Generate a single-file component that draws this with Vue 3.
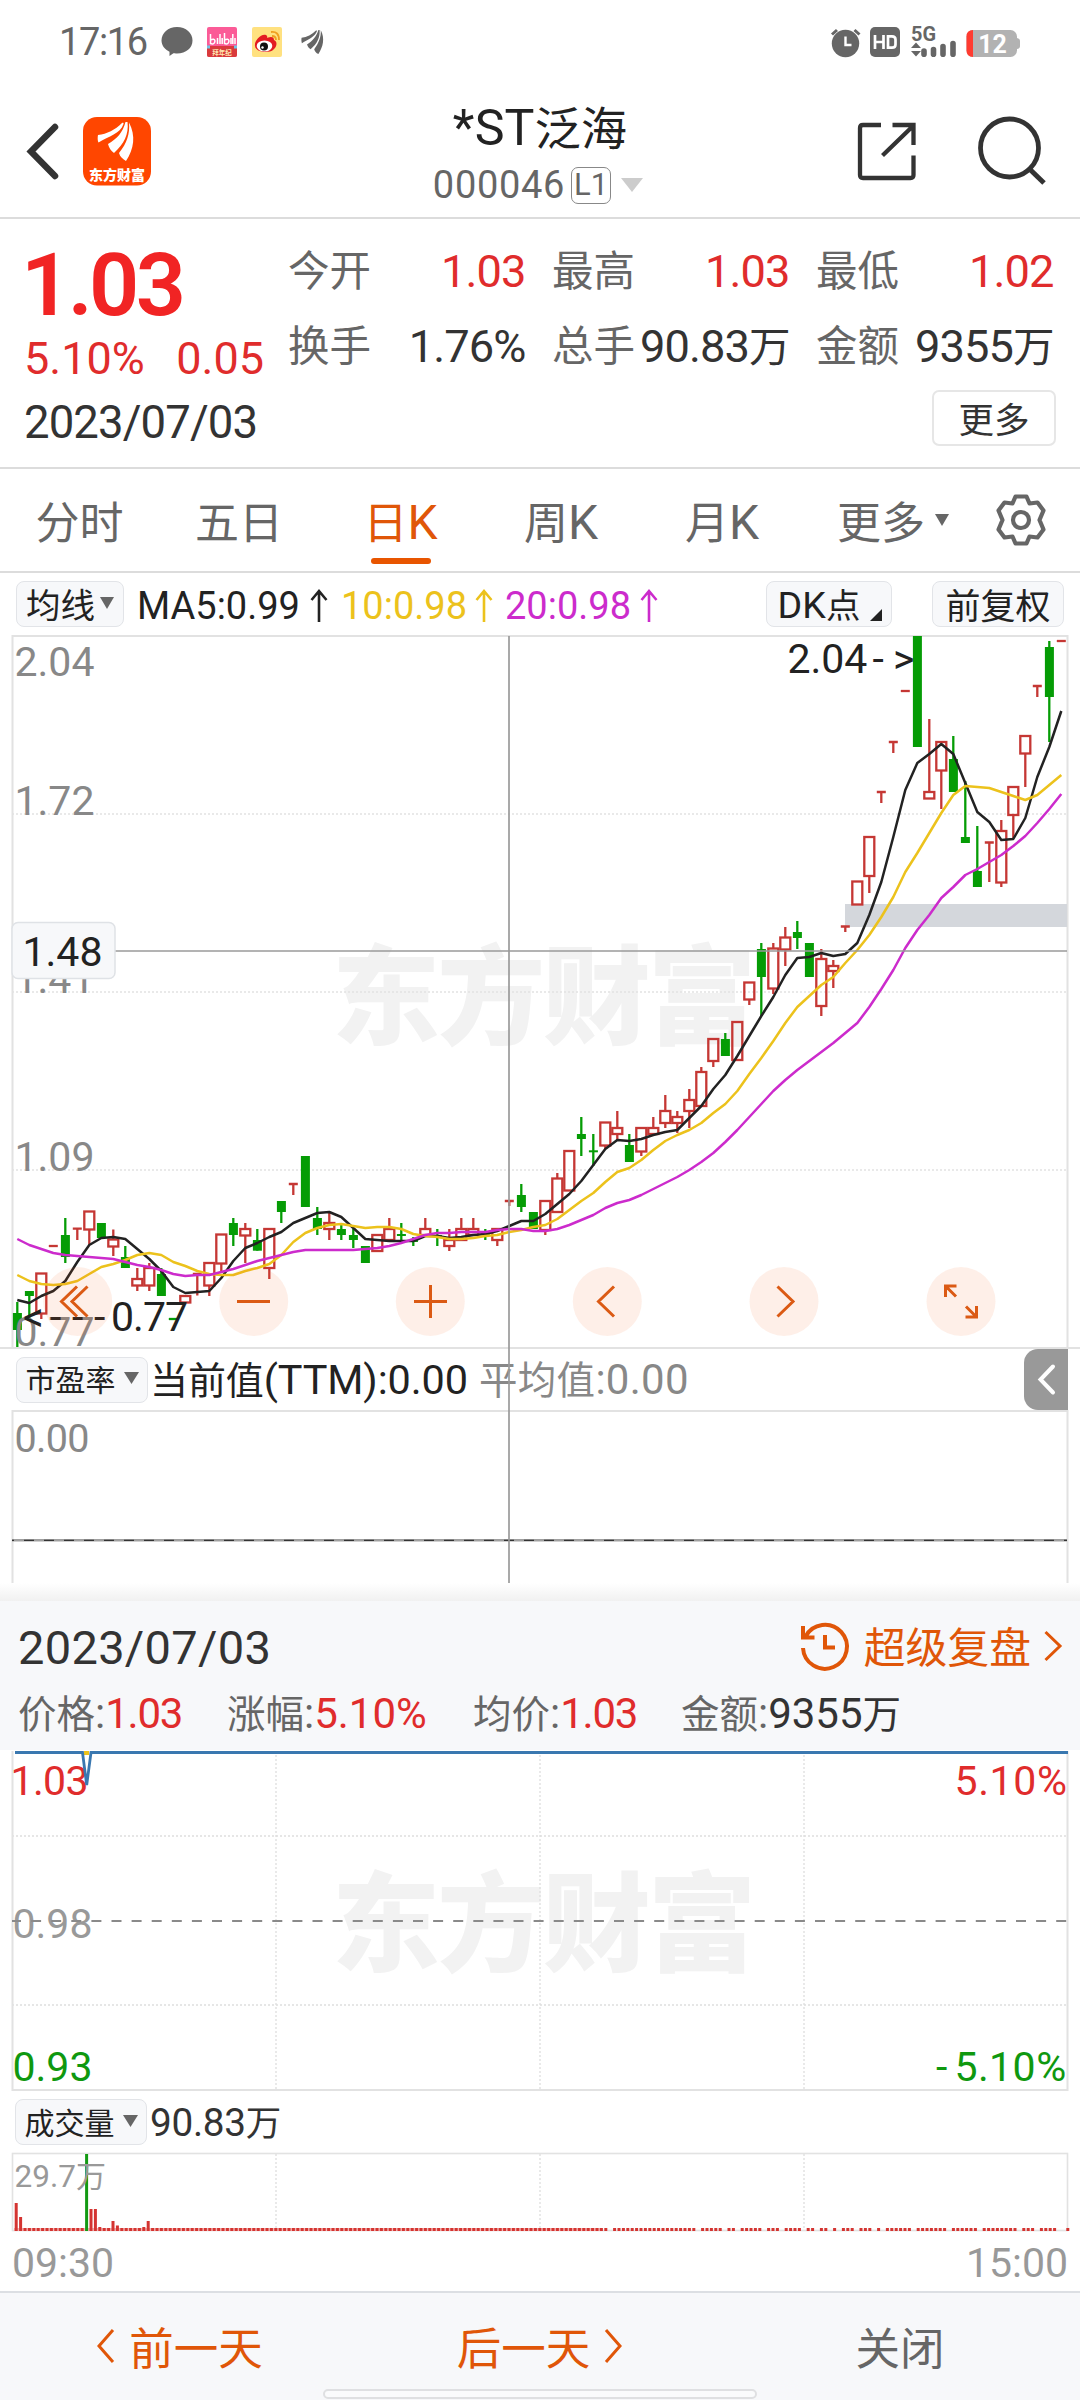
<script setup>
import { h } from 'vue'

// Mixed text: Latin runs are set slightly larger than the Chinese ones.
const Txt = (props) =>
  h('span', { class: 'mix' }, props.t.split(/([\u4e00-\u9fff]+)/).filter(Boolean).map((s) =>
    h('span', { class: /[\u4e00-\u9fff]/.test(s) ? 'zh' : 'la' }, s)))
Txt.props = ['t']

const stats = [
  ['今开', '1.03', true], ['最高', '1.03', true], ['最低', '1.02', true],
  ['换手', '1.76%', false], ['总手', '90.83万', false], ['金额', '9355万', false],
]
const tabs = [
  { t: '分时', w: 159 }, { t: '五日', w: 160 }, { t: '日K', w: 163, on: true }, { t: '周K', w: 158 }, { t: '月K', w: 164 },
]
const averages = [
  { t: 'MA5:0.99', w: 170, c: '#222', m: 13 },
  { t: '10:0.98', w: 131, c: '#ecc21c', m: 12 },
  { t: '20:0.98', w: 132, c: '#cc2bcc', m: 0 },
]
const detail = [
  ['价格:', '1.03', true, 209], ['涨幅:', '5.10%', true, 246], ['均价:', '1.03', true, 208], ['金额:', '9355万', false, 240],
]

// kind (r red, g green, t T-shape, d dash), high, body top, body bottom, low
const candles = [
  ['g', 1302, 1313, 1330, 1347], ['g', 1291, 1291, 1296, 1320], ['r', 1273.5, 1273.5, 1313.5, 1319], ['d', 1246, 1246, 1246, 1246],
  ['g', 1218, 1235, 1257, 1263], ['t', 1228.7, 1228.7, 1228.7, 1240], ['r', 1211.5, 1211.5, 1229.5, 1245], ['g', 1223, 1223, 1238, 1238],
  ['r', 1229.5, 1239.5, 1246.5, 1256], ['g', 1246, 1257, 1268, 1268], ['r', 1268, 1279, 1285.5, 1291], ['r', 1263, 1268, 1285.5, 1291],
  ['g', 1268, 1274, 1296, 1296], ['dg', 1319, 1319, 1319, 1319], ['r', 1296, 1296, 1302.5, 1302.5], ['t', 1274, 1274, 1274, 1295.5],
  ['r', 1263, 1263, 1285.5, 1296], ['r', 1234.5, 1234.5, 1263.5, 1273], ['g', 1218, 1223, 1235, 1246], ['r', 1223, 1229, 1235.5, 1263],
  ['g', 1229, 1240, 1250.7, 1250.7], ['r', 1229, 1229, 1268, 1279], ['g', 1201, 1201, 1212, 1223], ['t', 1184, 1184, 1184, 1195],
  ['g', 1156, 1156, 1207, 1207], ['g', 1207, 1218, 1229, 1235], ['r', 1213, 1223, 1229, 1240], ['g', 1223, 1229, 1235, 1240],
  ['g', 1229, 1235, 1240, 1248], ['g', 1246, 1246, 1263, 1263], ['r', 1235, 1235, 1251, 1251], ['r', 1218, 1229, 1240, 1240],
  ['g', 1223, 1234, 1236, 1240], ['g', 1237, 1240, 1242, 1246], ['r', 1218, 1229, 1235, 1235], ['g', 1229, 1235, 1237, 1246],
  ['r', 1229, 1240, 1246, 1251], ['r', 1218, 1229, 1240, 1240], ['r', 1218, 1229, 1235, 1235], ['g', 1229, 1233, 1235, 1240],
  ['r', 1229, 1229, 1240, 1246], ['t', 1201, 1201, 1201, 1206], ['g', 1184, 1195, 1207, 1212], ['g', 1212, 1212, 1229, 1229],
  ['r', 1201, 1201, 1230, 1235], ['r', 1173, 1178.5, 1212, 1212], ['r', 1151, 1151, 1190.5, 1190.5], ['g', 1117, 1134, 1139, 1156],
  ['g', 1134, 1150.3, 1152.3, 1166], ['r', 1122.5, 1122.5, 1145.5, 1149], ['r', 1111, 1128, 1134, 1140], ['g', 1134, 1145, 1162, 1162],
  ['r', 1128, 1128, 1151.5, 1156], ['r', 1117, 1128, 1134, 1134], ['r', 1095, 1111, 1123, 1128], ['r', 1111, 1117, 1123, 1133],
  ['r', 1089, 1100, 1111, 1128], ['r', 1067, 1072, 1106, 1106], ['r', 1039, 1039, 1061, 1067], ['g', 1033, 1039, 1056, 1056],
  ['r', 1022, 1022, 1060, 1060], ['r', 982.5, 982.5, 999.5, 1005], ['g', 943, 949, 977, 1016], ['r', 943, 948.5, 988.5, 994],
  ['r', 927, 937.5, 949.5, 966], ['g', 921, 932, 938, 949], ['g', 943, 943, 977, 977], ['r', 949, 959, 1006, 1016],
  ['r', 960, 966, 971, 988], ['t', 926.5, 926.5, 926.5, 932], ['r', 881.5, 881.5, 904.5, 904.5], ['r', 837, 837, 876, 893],
  ['t', 792, 792, 792, 803], ['t', 742, 742, 742, 753], ['d', 691, 691, 691, 691], ['g', 636, 636, 747, 747],
  ['r', 719, 792, 798.5, 798.5], ['r', 742, 742, 770.5, 809], ['g', 736, 759, 792, 792], ['g', 781, 837, 843, 843],
  ['g', 826, 871, 887, 887], ['t', 842.5, 842.5, 842.5, 882], ['r', 820, 831, 882.5, 887], ['r', 787, 787, 815, 838],
  ['r', 736, 736, 753.5, 787], ['t', 686, 686, 686, 697], ['g', 641, 647, 697, 742], ['d', 641, 641, 641, 641],
]
const cx = (i) => 17.3 + 12 * i
const line = (ys) => ys.map((y, i) => `${cx(i).toFixed(1)},${y}`).join(' ')
const ma5 = line([1300, 1303, 1296, 1291, 1281, 1262, 1245, 1238, 1237, 1239, 1249, 1259, 1271, 1287, 1293, 1292, 1291, 1278, 1261, 1248, 1243, 1237, 1232, 1223, 1218, 1213, 1212, 1217, 1228, 1239, 1240, 1241, 1241, 1241, 1236, 1236, 1238, 1237, 1235, 1234, 1231, 1226, 1221, 1221, 1214, 1204, 1194, 1181, 1165, 1149, 1140, 1141, 1139, 1135, 1132, 1130, 1118, 1106, 1089, 1075, 1056, 1036, 1016, 997, 975, 958, 957, 953, 956, 954, 943, 915, 882, 837, 790, 763, 754, 744, 754, 783, 812, 822, 840, 839, 818, 777, 747, 711])
const ma10 = line([1275, 1281, 1284, 1285, 1284, 1281, 1274, 1267, 1264, 1260, 1255, 1253, 1255, 1262, 1266, 1271, 1274, 1275, 1275, 1271, 1268, 1264, 1255, 1242, 1233, 1228, 1225, 1224, 1226, 1228, 1227, 1227, 1229, 1234, 1236, 1237, 1239, 1239, 1238, 1236, 1235, 1232, 1230, 1227, 1225, 1219, 1210, 1201, 1193, 1182, 1172, 1168, 1160, 1150, 1141, 1135, 1130, 1123, 1113, 1104, 1091, 1074, 1058, 1041, 1023, 1007, 996, 985, 977, 963, 950, 935, 917, 897, 872, 853, 833, 813, 795, 786, 787, 788, 792, 796, 800, 795, 785, 775])
const ma20 = line([1239, 1245, 1249, 1253, 1255, 1256, 1257, 1258, 1259, 1262, 1265, 1267, 1270, 1274, 1276, 1275, 1275, 1272, 1269, 1265, 1261, 1258, 1255, 1252, 1250, 1250, 1250, 1250, 1250, 1249, 1248, 1246, 1243, 1239, 1235, 1233, 1233, 1232, 1232, 1232, 1230, 1229, 1229, 1231, 1231, 1229, 1225, 1220, 1215, 1208, 1203, 1200, 1195, 1189, 1183, 1177, 1170, 1162, 1153, 1142, 1130, 1117, 1104, 1091, 1080, 1070, 1061, 1052, 1043, 1033, 1023, 1007, 989, 970, 948, 930, 915, 898, 887, 875, 869, 862, 855, 846, 836, 823, 809, 794])

const tall = { 0: 28, 1: 14, 16: 77, 17: 22, 18: 22, 19: 4, 22: 10, 23: 5.5, 29: 4, 30: 10 }
const traded = [[0, 601], [606, 609], [615, 654], [658, 697], [702, 723], [729, 737], [742, 763], [768, 780], [786, 799], [807, 815], [820, 829], [834, 838], [842, 855], [860, 873], [877, 882], [886, 913], [917, 946], [952, 978], [983, 1017], [1021, 1034], [1039, 1056], [1065, 1069]]
const volumes = Array.from({ length: 240 }, (_, i) => ({ i, x: 16.2 + i * 4.4, hgt: tall[i] || 3 }))
  .filter((v) => traded.some(([a, b]) => v.x >= a - 0.7 && v.x <= b + 0.7))
</script>

<template>
  <div class="phone">
    <header class="status">
      <span class="time">17:16</span>
      <svg class="s-left" width="180" height="40" viewBox="155 22 180 40">
        <path d="M177 27c9 0 15.500 6 15.500 13.500S186 53.500 177 53.500c-1.600 0-3-.2-3.600-.2L169.500 56v-4.200C165 49.500 161.500 45.500 161.500 40.500 161.500 33 168 27 177 27z" fill="#666" />
        <rect x="207" y="27" width="30" height="30" rx="2" fill="#fb5b97" />
        <rect x="207" y="46" width="30" height="11" rx="2" fill="#d93a3c" />
        <path d="M207 47h3m24 0h3" stroke="#6fc3e6" stroke-width="3" />
        <path d="M210.500 34v9.500q4 1.500 4.500-2.500-.5-3-4.500-1M217.500 38v6M220 34v10M222.200 38v6M224.500 33v10.500q4 1.500 4.500-2.500-.5-3-4.500-1M231 38v6M232.800 34v10M235 38v6" fill="none" stroke="#fff" stroke-width="1.500" />
        <text x="222" y="54.500" text-anchor="middle" font-size="6.500" font-weight="700" fill="#ffe9b0">拜年纪</text>
        <rect x="252" y="27" width="30" height="30" rx="2" fill="#ffe180" />
        <path d="M255 46c-1-6 7-13 11-11 2 1 1 3 1 3s7-3 7 2c5 2 2 10-4 11.500-7 1.500-14.500-.5-15-5.500z" fill="#e31b22" />
        <ellipse cx="264.500" cy="46" rx="7.800" ry="5.500" fill="#fff" />
        <circle cx="264" cy="46.500" r="4" fill="#111" /><circle cx="262.500" cy="47.500" r="1.200" fill="#fff" />
        <path d="M271 32q8-1 8 8M272 36q4 0 4 4" fill="none" stroke="#f0a020" stroke-width="1.800" />
        <g fill="#666" transform="translate(301 30) scale(.6)">
          <path d="M1 13C10 12 18 8 25 1c1-.8 2 0 1.500 1C23 12 12 15 1.500 22 .5 19 .5 15 1 13z" />
          <path d="M10 24C20 18 26 10 29 0h2C32 12 27 23 16 32c-3-2-5-5-6-8z" />
          <path d="M22 32C30 21 33.500 12 33 .5 40 14 37 28 29 40c-4-2-6-4-7-8z" />
        </g>
      </svg>
      <svg class="s-right" width="200" height="40" viewBox="825 22 200 40">
        <circle cx="845.500" cy="43.500" r="13.700" fill="#666" />
        <path d="M832 34.500l5-4.500M859.500 34.500l-5-4.500" stroke="#666" stroke-width="3" />
        <path d="M845.500 36.500v8.500h6" fill="none" stroke="#fff" stroke-width="2.400" />
        <rect x="870" y="27" width="30" height="30" rx="5" fill="#666" />
        <path d="M875 35v14M883.500 35v14M875 42h8.500M888 36.300h4q3.500 0 3.500 3.200v5q0 3.200-3.500 3.200h-4z" fill="none" stroke="#fff" stroke-width="2.700" />
        <text x="911" y="41" font-size="19.500" font-weight="700" fill="#666" textLength="25" lengthAdjust="spacingAndGlyphs">5G</text>
        <path d="M911 48l5-5.500 5 5.500zM911 51l5 5.500 5-5.500z" fill="#666" />
        <path d="M924 51v3.200M933.500 49.500v4.700M943 46.500v7.700M953 43.500v10.700" stroke="#666" stroke-width="5.600" stroke-linecap="round" />
        <rect x="966.500" y="30" width="50.500" height="27" rx="6.500" fill="#b2b2b2" />
        <path d="M1017 38q3 .5 3 3v5q0 2.500-3 3z" fill="#b2b2b2" />
        <path d="M973 30v27q-6.500 0-6.500-6.500v-14q0-6.500 6.500-6.500z" fill="#ff3b30" />
        <text x="992.500" y="52.500" text-anchor="middle" font-size="25" font-weight="700" fill="#fff">12</text>
      </svg>
    </header>

    <nav class="head">
      <svg class="back" width="136" height="80" viewBox="20 112 136 80">
        <path d="M55 127L31 151.500 55 176" fill="none" stroke="#333" stroke-width="6.500" stroke-linecap="round" />
        <rect x="83" y="117" width="68" height="68.500" rx="14" fill="#ff4600" />
        <g fill="#fff" transform="translate(97 122)">
          <path d="M1 13C10 12 18 8 25 1c1-.8 2 0 1.500 1C23 12 12 14 1.500 20.500 .5 19 .5 15 1 13z" />
          <path d="M11 22C20 17 26 10 28.500 0h2C32 12 27 22 17 31c-3-2-5-5-6-9z" />
          <path d="M22 31C30 21 33 12 32 .5 39 14 37 27 29 39c-3-2-6-4-7-8z" />
        </g>
        <text x="117" y="180" text-anchor="middle" font-size="14" font-weight="900" fill="#fff" textLength="56" lengthAdjust="spacingAndGlyphs">东方财富</text>
      </svg>
      <div class="title">
        <div class="name"><Txt t="*ST泛海" /></div>
        <div class="code"><span>000046</span><i class="l1">L1</i><svg width="22" height="14" viewBox="0 0 22 14"><path d="M0 0h22L11 14z" fill="#ccc" /></svg></div>
      </div>
      <svg class="tools" width="200" height="80" viewBox="850 110 200 80" fill="none" stroke="#333" stroke-width="4.300">
        <path d="M881 125h-18q-3 0-3 3v47q0 3 3 3h47.500q3 0 3-3V155.500M892.500 125h21v20M912 127L882.500 155.500" />
        <circle cx="1009.500" cy="148" r="29" stroke-width="4.800" />
        <path d="M1029 168.500L1044 183" stroke-width="5" />
      </svg>
    </nav>

    <section class="quote">
      <div class="price">
        <div class="now">1.03</div>
        <div class="chg"><span>5.10%</span><span>0.05</span></div>
        <div class="day">2023/07/03</div>
      </div>
      <div class="right">
        <div class="stats">
          <div v-for="s in stats" :key="s[0]" class="stat">
            <span class="k">{{ s[0] }}</span><span class="v" :class="{ up: s[2] }"><Txt :t="s[1]" /></span>
          </div>
        </div>
        <button class="more">更多</button>
      </div>
    </section>

    <nav class="tabs">
      <div v-for="t in tabs" :key="t.t" class="tab" :class="{ on: t.on }" :style="{ width: t.w + 'px' }"><span><Txt :t="t.t" /></span></div>
      <div class="tab last"><span>更多</span><svg width="14" height="12" viewBox="0 0 14 12"><path d="M0 0h14L7 12z" fill="#666" /></svg></div>
      <svg class="gear" width="54" height="54" viewBox="-27 -27 54 54" fill="none" stroke="#666" stroke-width="4.200" stroke-linejoin="round">
        <path d="M-5.500-23.500H5.500L8.500-16.500 16.500-17.500 22.500-9.500 18.500 0 22.500 9.500 16.500 17.500 8.500 16.500 5.500 23.500H-5.500L-8.500 16.500-16.500 17.500-22.500 9.500-18.500 0-22.500-9.500-16.500-17.500-8.500-16.500z" />
        <circle r="8" />
      </svg>
    </nav>

    <div class="marow">
      <button class="chip ma">均线<svg width="14" height="12" viewBox="0 0 14 12"><path d="M0 0h14L7 12z" fill="#666" /></svg></button>
      <div v-for="a in averages" :key="a.t" class="avg" :style="{ color: a.c, marginRight: a.m + 'px' }">
        <span :style="{ width: a.w + 'px' }">{{ a.t }}</span>
        <svg width="18" height="34" viewBox="0 0 18 34" fill="none" stroke="currentColor" stroke-width="2.600"><path d="M9 33V2M1.500 11L9 2l7.500 9" /></svg>
      </div>
      <button class="chip dk"><Txt t="DK点" /><svg width="12" height="12" viewBox="0 0 12 12"><path d="M12 0v12H0z" fill="#222" /></svg></button>
      <button class="chip fq">前复权</button>
    </div>

    <section class="kline">
      <svg class="block" width="1080" height="712" viewBox="0 635 1080 712">
        <text x="332" y="1036" font-size="108" font-weight="900" fill="#f2f2f2" textLength="424">东方财富</text>
        <path d="M12 814H1067M12 992H1067M12 1170H1067" stroke="#e2e2e2" stroke-width="1.500" stroke-dasharray="2 2" />
        <path d="M12.500 1347V636H1067.500V1347" fill="none" stroke="#e2e2e2" stroke-width="2" />
        <rect x="845" y="904" width="222" height="23" fill="#d4d7dc" />
        <g v-for="(c, i) in candles" :key="i" :stroke="c[0] === 'g' || c[0] === 'dg' ? '#059c05' : '#c53734'" stroke-width="2.300" fill="none">
          <template v-if="c[0] === 'g'">
            <path :d="`M${cx(i)} ${c[1]}V${c[4]}`" />
            <rect :x="cx(i) - 4.400" :y="c[2]" width="9" :height="c[3] - c[2]" fill="#059c05" stroke="none" />
          </template>
          <template v-else-if="c[0] === 'r'">
            <path :d="`M${cx(i)} ${c[1]}V${c[2]}M${cx(i)} ${c[3]}V${c[4]}`" />
            <rect :x="cx(i) - 5" :y="c[2]" width="10" :height="c[3] - c[2]" />
          </template>
          <path v-else-if="c[0] === 't'" :d="`M${cx(i) - 4.500} ${c[2]}h9m-4.500 0V${c[4]}`" />
          <path v-else :d="`M${cx(i) - 4.500} ${c[2]}h9`" />
        </g>
        <g fill="none" stroke-width="2.500" stroke-linejoin="round">
          <polyline :points="ma5" stroke="#222" />
          <polyline :points="ma10" stroke="#ecc21c" />
          <polyline :points="ma20" stroke="#cc2bcc" />
        </g>
        <g font-size="41" fill="#888">
          <text x="14.500" y="676">2.04</text><text x="14.500" y="815">1.72</text><text x="14.500" y="993">1.41</text>
          <text x="14.500" y="1171">1.09</text><text x="14.500" y="1346">0.77</text>
        </g>
        <g fill="#222" font-size="41">
          <text x="787.500 810.500 821.300 844.300 872.500 893" y="673">2.04-&gt;</text>
          <text x="23 50 72 94 111 133 143 165" y="1330.500">&lt;---0.77</text>
        </g>
        <path d="M115 951H1067" stroke="#9a9a9a" stroke-width="1.700" />
        <rect x="12" y="922.500" width="103" height="56" rx="6" fill="#f7f8fa" stroke="#dfe2e6" stroke-width="1.500" />
        <text x="22.500" y="965.500" font-size="41" fill="#222">1.48</text>
        <g fill="#f26522" fill-opacity=".1">
          <circle v-for="x in [77.700, 253.700, 430.300, 607.300, 784, 961]" :key="x" :cx="x" cy="1301.500" r="34.500" />
        </g>
        <path d="M77 1286.500L61.500 1301.500 77 1316.500M87.500 1286.500L72 1301.500 87.500 1316.500M237 1301.500h33M414 1301.500h33M430.500 1285v33M614 1286.500L598.500 1301.500 614 1316.500M777.500 1286.500L793 1301.500 777.500 1316.500M956 1296.500L945.500 1286M945.500 1297v-11h11M966 1306.500L976.500 1317M976.500 1306v11h-11" fill="none" stroke="#db5a14" stroke-width="3" />
      </svg>

      <div class="indrow">
        <button class="chip ind">市盈率<svg width="15" height="12" viewBox="0 0 15 12"><path d="M0 0h15L7.500 12z" fill="#666" /></svg></button>
        <span class="cur"><Txt t="当前值(TTM):0.00" /></span><span class="avgv"><Txt t="平均值:0.00" /></span>
        <span class="fold"><svg width="44" height="61" viewBox="0 0 44 61"><path d="M29 17.500L16.500 30.500l12.500 13" fill="none" stroke="#fff" stroke-width="4" stroke-linecap="round" /></svg></span>
      </div>

      <svg class="block" width="1080" height="173" viewBox="0 1410 1080 173">
        <path d="M12.500 1583V1411H1067.500V1583" fill="none" stroke="#e2e2e2" stroke-width="2" />
        <text x="14.500" y="1452" font-size="39.500" fill="#888" textLength="75">0.00</text>
        <path d="M12 1540.300H1067" stroke="#a0a0a0" stroke-width="2.600" />
        <path d="M12 1540.300H1067" stroke="#333" stroke-width="1.300" stroke-dasharray="10 10" stroke-dashoffset="8" />
      </svg>
      <i class="cross"></i>
    </section>
    <div class="shade"></div>

    <section class="sheet">
      <div class="sheet-top">
        <span class="sday">2023/07/03</span>
        <span class="replay">
          <svg width="50" height="50" viewBox="0 0 50 50" fill="none" stroke="#e05608" stroke-width="4"><path d="M5.500 15.500A22 22 0 1 1 3 27M3 5v11.500H14.500M25 14v12.500H35" /></svg>
          <b>超级复盘</b>
          <svg width="18" height="32" viewBox="0 0 18 32" fill="none" stroke="#e05608" stroke-width="3"><path d="M1.500 2L16 16 1.500 30" /></svg>
        </span>
      </div>
      <div class="sheet-row">
        <span v-for="d in detail" :key="d[0]" :style="{ width: d[3] + 'px' }"><Txt :t="d[0]" /><em :class="{ up: d[2], tight: d[1] === '1.03' }"><Txt :t="d[1]" /></em></span>
      </div>
    </section>

    <svg class="block" width="1080" height="342" viewBox="0 1750 1080 342">
      <text x="332" y="1963" font-size="108" font-weight="900" fill="#f2f2f2" textLength="424">东方财富</text>
      <path d="M12 1836H1067M12 2005H1067M276 1755V2090M540 1755V2090M804 1755V2090" stroke="#dedede" stroke-width="1.300" stroke-dasharray="2 2" />
      <path d="M12.500 1751V2090H1067.500V1751" fill="none" stroke="#e2e2e2" stroke-width="2" />
      <g font-size="41">
        <text x="10.500" y="1794.500" fill="#e02c2c" textLength="78">1.03</text>
        <text x="954.500" y="1794.500" fill="#e02c2c" textLength="112.500">5.10%</text>
        <text x="12.500" y="1937.500" fill="#999">0.98</text>
        <text x="12.500" y="2080.500" fill="#0f980f">0.93</text>
        <text x="936 954.500 978 989 1012.500 1036.200" y="2080.500" fill="#0f980f">-5.10%</text>
      </g>
      <path d="M12 1921H1067" stroke="#8a8a8a" stroke-width="2" stroke-dasharray="10 10.100" stroke-dashoffset="1" />
      <path d="M84 1753h5" stroke="#ecc21c" stroke-width="4" />
      <path d="M15 1752.500H82.500L86.700 1785 91 1752.500H1068" fill="none" stroke="#3a78b0" stroke-width="2.800" />
    </svg>

    <div class="volrow">
      <button class="chip vol">成交量<svg width="15" height="12" viewBox="0 0 15 12"><path d="M0 0h15L7.500 12z" fill="#666" /></svg></button>
      <span><Txt t="90.83万" /></span>
    </div>

    <svg class="block" width="1080" height="82" viewBox="0 2152 1080 82">
      <path d="M276 2154V2230M540 2154V2230M804 2154V2230" stroke="#dedede" stroke-width="1.300" stroke-dasharray="2 2" />
      <rect x="12.500" y="2153.500" width="1055" height="77" fill="none" stroke="#e2e2e2" stroke-width="1.600" />
      <rect x="14" y="2228" width="588" height="3" fill="#f4b5b3" />
      <rect v-for="v in volumes" :key="v.i" :x="v.x - 1.500" :y="2231 - v.hgt" width="3" :height="v.hgt" :fill="v.i === 16 ? '#139a13' : '#d43431'" />
      <text x="14.500" y="2186.500" font-size="31.500" fill="#999">29.7<tspan font-size="30">万</tspan></text>
    </svg>
    <div class="times"><span>09:30</span><span>15:00</span></div>

    <footer class="foot">
      <div class="btn prev"><svg width="18" height="36" viewBox="0 0 18 36"><path d="M16 2L2 18l14 16" fill="none" stroke="#e05608" stroke-width="3" /></svg>前一天</div>
      <div class="btn next">后一天<svg width="18" height="36" viewBox="0 0 18 36"><path d="M2 2l14 16L2 34" fill="none" stroke="#e05608" stroke-width="3" /></svg></div>
      <div class="btn close">关闭</div>
      <i class="home"></i>
    </footer>
  </div>
</template>

<style>
.mix { white-space: nowrap; }
.mix .la { font-size: 1.09em; }
</style>

<style scoped>
.phone { width: 1080px; height: 2400px; display: flex; flex-direction: column; background: #fff; overflow: hidden; font-family: Roboto, "Noto Sans CJK SC", sans-serif; color: #333; box-sizing: border-box; }
.phone > * { flex: none; box-sizing: border-box; }
svg { display: block; flex: none; overflow: visible; }
svg text { font-family: Roboto, "Noto Sans CJK SC", sans-serif; }
i, em { font-style: normal; }
button { font: inherit; color: inherit; box-sizing: border-box; padding: 0; }
.up { color: #e02c2c; }

.status { height: 84px; display: flex; align-items: center; padding: 0 55px 0 59px; }
.time { width: 96px; font-size: 38px; letter-spacing: -1.4px; color: #666; line-height: 40px; }
.s-right { margin-left: auto; }

.head { height: 135px; border-bottom: 2px solid #dcdcdc; display: flex; justify-content: space-between; padding: 0 30px 0 20px; }
.back { margin-top: 28px; }
.tools { margin-top: 26px; }
.title { display: flex; flex-direction: column; align-items: center; margin-left: 74px; }
.name { font-size: 46px; line-height: 60px; color: #222; margin-top: 14px; letter-spacing: .2px; }
.code { display: flex; align-items: center; font-size: 38px; letter-spacing: .7px; line-height: 44px; color: #666; margin-top: 4px; margin-left: -4px; }
.l1 { width: 40px; height: 37px; border: 1.500px solid #888; border-radius: 7px; box-sizing: border-box; font-size: 31px; line-height: 34px; text-align: center; margin: 0 10px 0 6px; letter-spacing: 0; }

.quote { height: 250px; border-bottom: 2px solid #dcdcdc; display: flex; padding: 0 24px 0 24px; }
.price { width: 265px; }
.now { font-size: 88px; font-weight: 600; line-height: 88px; color: #f12424; margin: 22px 0 0 -3px; letter-spacing: -3.6px; }
.chg { display: flex; justify-content: space-between; font-size: 45px; line-height: 50px; color: #e02c2c; margin-top: 5px; padding-right: 26px; width: 240px; }
.day { font-size: 45.500px; line-height: 50px; margin-top: 14px; letter-spacing: -.9px; white-space: nowrap; }
.right { flex: 1; display: flex; flex-direction: column; align-items: flex-end; }
.stats { display: grid; grid-template-columns: repeat(3, 237px); column-gap: 27px; width: 767px; margin: 15px 0 0 -1px; row-gap: 0; align-self: flex-start; }
.stat { height: 75px; display: flex; justify-content: space-between; align-items: center; font-size: 41.500px; line-height: 75px; white-space: nowrap; letter-spacing: 0; }
.v { letter-spacing: -.9px; margin-right: -.6px; }
.k { color: #666; }
.more { width: 124px; height: 56px; margin: 6px 0 0; border: 2px solid #e6e6e6; border-radius: 7px; background: #fff; font-size: 35.500px; padding-bottom: 3px; }

.tabs { height: 104px; border-bottom: 2px solid #dcdcdc; display: flex; align-items: center; font-size: 44px; color: #666; padding-left: 0; }
.tab { height: 102px; display: flex; align-items: center; justify-content: center; position: relative; padding-bottom: 0; box-sizing: border-box; }
.tab.on { color: #e05608; }
.tab.on::after { content: ""; position: absolute; bottom: 7px; left: 52px; width: 60px; height: 6px; border-radius: 3px; background: #e85500; }
.last { margin-left: 33px; width: 114px; gap: 10px; justify-content: flex-start; }
.gear { margin-left: 43px; }

.marow { height: 62px; display: flex; align-items: center; padding: 0 16px; }
.chip { height: 46px; border: 1.500px solid #e2e4e8; border-radius: 8px; background: #f7f8fa; color: #222; display: flex; align-items: center; justify-content: center; white-space: nowrap; }
.marow .chip { padding-bottom: 2px; }
.ma { width: 108px; font-size: 34.500px; gap: 5px; margin-right: 13px; }
.avg { display: flex; align-items: center; font-size: 38px; line-height: 44px; gap: 3px; white-space: nowrap; padding-top: 4px; }
.dk { width: 126px; font-size: 34.500px; margin-left: auto; gap: 10px; }
.dk svg { align-self: flex-end; margin: 0 -2px 3px 0; }
.fq { width: 132px; font-size: 35px; margin-left: 40px; }

.kline { position: relative; height: 948px; }
.indrow { height: 63px; border-top: 2px solid #e2e2e2; display: flex; align-items: center; padding: 0 12px 0 16px; box-sizing: border-box; white-space: nowrap; }
.ind { width: 132px; font-size: 30px; gap: 8px; padding-bottom: 3px; }
.cur { font-size: 38px; color: #222; margin-left: 2px; width: 329px; padding-bottom: 5px; box-sizing: border-box; letter-spacing: -.1px; }
.avgv { font-size: 38.500px; color: #888; padding-bottom: 5px; letter-spacing: .3px; }
.fold { margin-left: auto; width: 44px; height: 61px; border-radius: 14px 0 0 14px; background: #999; }
.cross { position: absolute; left: 508px; top: 1px; width: 2px; height: 947px; background: #9a9a9a; opacity: .85; }
.shade { height: 18px; background: linear-gradient(#fff, #f1f1f1); }

.sheet { height: 149px; background: #f7f8fa; }
.sheet-top { height: 92px; display: flex; justify-content: space-between; align-items: center; padding: 0 18px 0 18px; }
.sday { font-size: 47px; letter-spacing: .3px; }
.replay { display: flex; align-items: center; color: #e05608; margin-top: -3px; }
.replay b { font-weight: 400; font-size: 41.800px; margin: 0 13px 0 14px; position: relative; top: -1px; }
.sheet-row { display: flex; height: 42px; align-items: center; padding-left: 18px; font-size: 38.500px; color: #666; white-space: nowrap; line-height: 42px; }
.sheet-row em:not(.up) { color: #333; }
.tight { letter-spacing: -1.2px; }

.volrow { height: 60px; display: flex; align-items: center; padding-left: 15px; }
.vol { width: 132px; font-size: 30px; gap: 8px; padding-bottom: 3px; }
.volrow > span { font-size: 35.500px; margin-left: 3px; padding-bottom: 4px; letter-spacing: -.3px; }
.times { height: 57px; display: flex; justify-content: space-between; padding: 4px 12px 0; font-size: 41px; line-height: 50px; color: #999; }

.foot { height: 109px; border-top: 2px solid #dcdfe3; background: #f7f8fa; position: relative; display: flex; font-size: 44.500px; color: #e05608; }
.btn { width: 360px; height: 105px; display: flex; align-items: center; justify-content: center; gap: 14px; }
.next { padding-right: 1px; box-sizing: border-box; }
.close { color: #666; }
.home { position: absolute; left: 323px; top: 96px; width: 434px; height: 10px; box-sizing: border-box; border: 2px solid #dfe0e2; border-radius: 5px; background: #fafbfc; }
</style>
